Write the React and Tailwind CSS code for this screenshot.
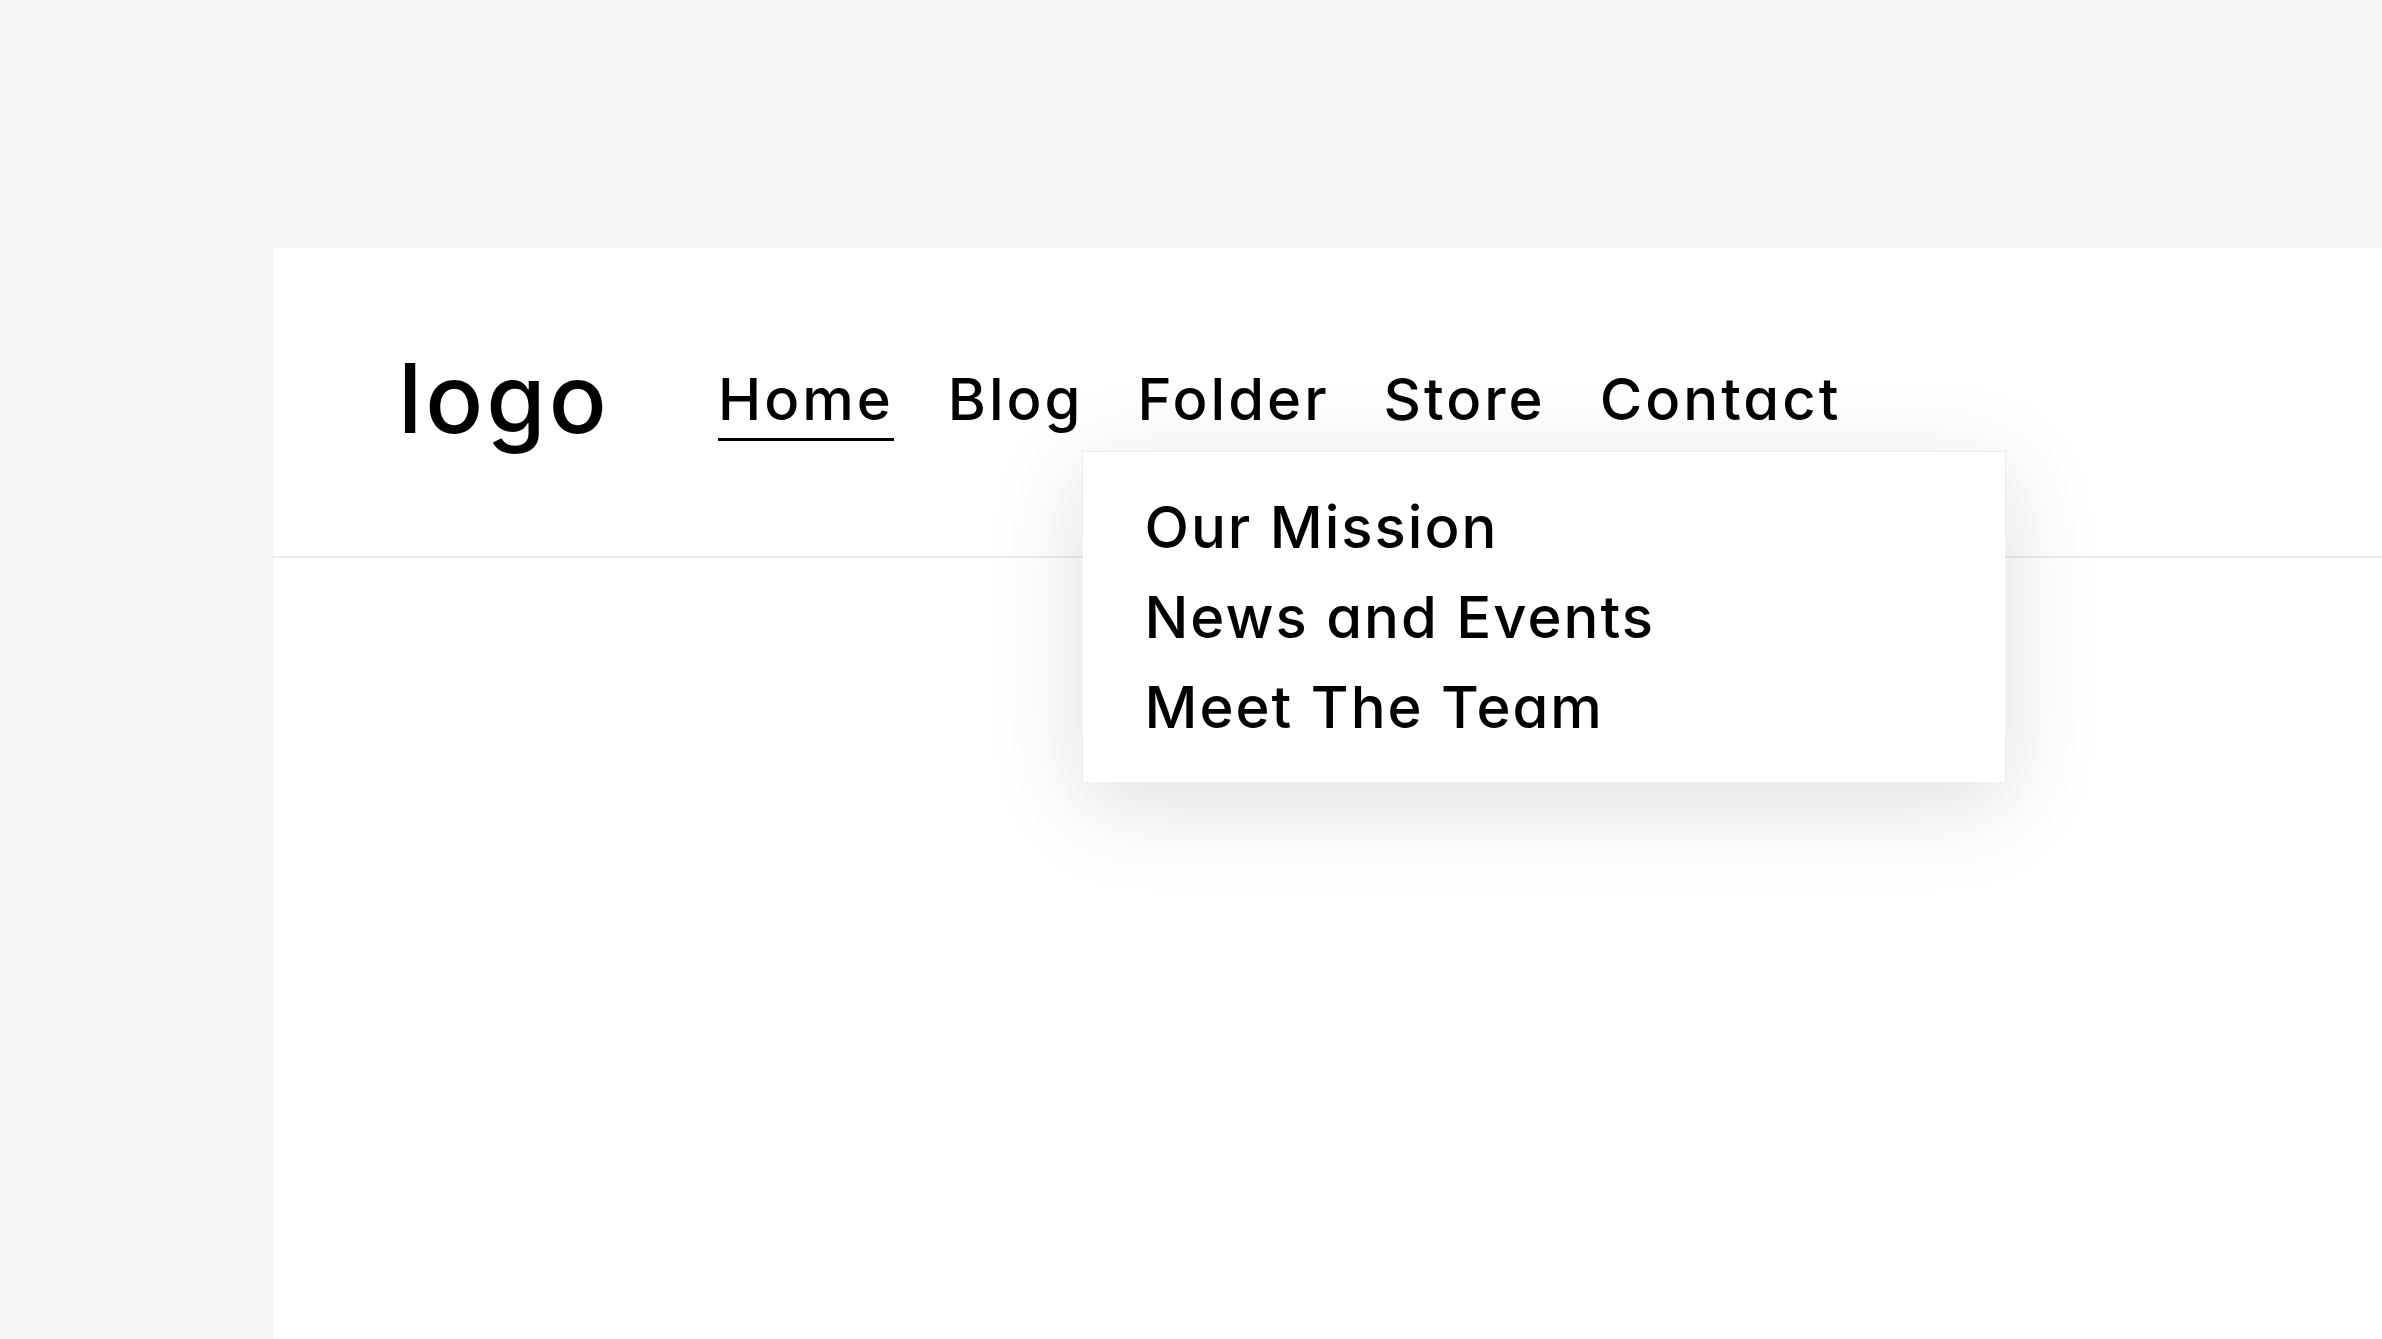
import React from "react";

const navItems = ["Home", "Blog", "Folder", "Store", "Contact"];
const folderItems = ["Our Mission", "News and Events", "Meet The Team"];

const Header = () => {
  return (
    <header className="relative flex items-start h-[310px] pl-[125px] border-b-2 border-[#ebebeb]">
      {/* Logo */}
      <div className="w-[320px] mt-[102px] text-[96px] leading-none tracking-[3px] text-black">
        logo
      </div>

      {/* Nav */}
      <nav className="flex items-start gap-[54px] mt-[122px]">
        {navItems.map((item) => (
          <div key={item} className="relative">
            <a
              href="#"
              className={
                item === "Home"
                  ? "block text-[58px] leading-none tracking-[3px] text-black border-b-[3px] border-black pb-[10px]"
                  : "block text-[58px] leading-none tracking-[3px] text-black"
              }
            >
              {item}
            </a>

            {item === "Folder" && (
              <div className="absolute top-[81px] left-[-56px] z-10 w-[924px] bg-white border border-[#eeeeee] shadow-[0_20px_90px_rgba(0,0,0,0.13)] pt-[30px] pb-[30px] pl-[62px]">
                {folderItems.map((sub) => (
                  <a
                    key={sub}
                    href="#"
                    className="block text-[58px] leading-[90px] tracking-[2px] text-black"
                  >
                    {sub}
                  </a>
                ))}
              </div>
            )}
          </div>
        ))}
      </nav>
    </header>
  );
};

export default function App() {
  return (
    <div className="min-h-screen bg-[#f4f4f4] pt-[248px] pl-[273px] font-['Inter',sans-serif] font-medium [font-feature-settings:'cv11'] overflow-hidden">
      <div className="bg-white h-[1091px]">
        <Header />
      </div>
    </div>
  );
}
